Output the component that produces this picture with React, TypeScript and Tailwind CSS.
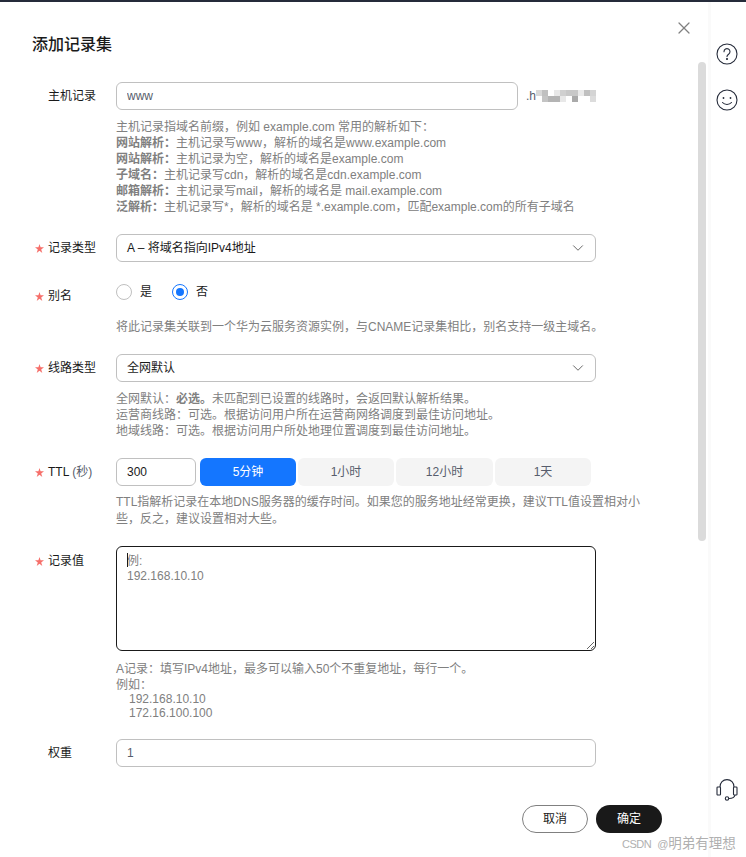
import { ChevronDown, X } from "lucide-react";

const font = "font-['Liberation_Sans','Noto_Sans_CJK_SC',sans-serif]";

function Label({ text, required }: { text: React.ReactNode; required?: boolean }) {
  return (
    <div className="w-[116px] shrink-0 flex items-center pl-[35px] text-xs leading-4 text-[#1a1a1a]">
      <span className="w-[13px] shrink-0">
        {required && (
          <svg width="9" height="9" viewBox="0 0 10 10" fill="#f66f6a">
            <path d="M5 0l1.200 3.700H10L6.900 6l1.200 4L5 7.500 1.900 10l1.200-4L0 3.700h3.800z" />
          </svg>
        )}
      </span>
      <span>{text}</span>
    </div>
  );
}

function Help({ children, className = "" }: { children: React.ReactNode; className?: string }) {
  return <div className={`text-xs leading-4 text-[#808080] ${className}`}>{children}</div>;
}

function Select({ value }: { value: string }) {
  return (
    <div className="w-[480px] h-7 border border-[#c0c0c0] rounded-md flex items-center justify-between pl-[10px] pr-2 text-xs text-[#1a1a1a]">
      <span>{value}</span>
      <ChevronDown className="w-[18px] h-[18px] text-[#666666]" strokeWidth={1.3} />
    </div>
  );
}

const mosaic = [
  "#d8d8d8", "#c0c0c0", "#ffffff", "#e8e8e8", "#d0d0d0", "#c8c8c8", "#c8c8c8", "#eaeaea", "#c0c0c0", "#d4d4d4",
  "#ffffff", "#c4c4c4", "#b4b4b4", "#b4b4b4", "#e8e8e8", "#ffffff", "#aaaaaa", "#ffffff", "#ffffff", "#dcdcdc",
];

function Radio({ checked, text }: { checked?: boolean; text: string }) {
  return (
    <div className="flex items-center gap-2 w-14">
      <span className={`w-4 h-4 rounded-full border flex items-center justify-center ${checked ? "border-[#1476ff]" : "border-[#c0c0c0]"}`}>
        {checked && <span className="w-2 h-2 rounded-full bg-[#1476ff]" />}
      </span>
      <span className="text-xs text-[#1a1a1a]">{text}</span>
    </div>
  );
}

export default function App() {
  return (
    <div className={`${font} w-[746px] h-[857px] overflow-hidden bg-white flex flex-col relative`}>
      <div className="h-0.5 bg-[#252b3a] shrink-0" />
      <div className="flex flex-1 min-h-0">
        {/* Dialog */}
        <div className="w-[708px] shrink-0 relative">
          <button className="absolute left-[674px] top-4 text-[#808080]">
            <X className="w-5 h-5" strokeWidth={1.5} />
          </button>
          {/* Scrollbar */}
          <div className="absolute left-[698px] top-[60px] w-2 h-[479px] rounded bg-[#dbdbdb]" />

          <h2 className="pl-8 pt-[33px] text-base leading-5 font-medium text-[#1a1a1a]">添加记录集</h2>

          {/* 主机记录 */}
          <div className="flex mt-[27px]">
            <div className="pt-[6px]"><Label text="主机记录" /></div>
            <div>
              <div className="flex items-center">
                <input
                  readOnly
                  value="www"
                  className="w-[402px] h-7 border border-[#c0c0c0] rounded-md px-[10px] text-xs text-[#575d6c] outline-none"
                />
                <span className="ml-2 text-xs text-[#575d6c] w-[10px]">.h</span>
                <div className="grid grid-cols-[repeat(10,6px)] auto-rows-[6px]">
                  {mosaic.map((c, i) => (
                    <span key={i} style={{ backgroundColor: c }} />
                  ))}
                </div>
              </div>
              <Help className="mt-[9px]">
                <div>主机记录指域名前缀，例如 example.com 常用的解析如下：</div>
                <div><b>网站解析：</b>主机记录写www，解析的域名是www.example.com</div>
                <div><b>网站解析：</b>主机记录为空，解析的域名是example.com</div>
                <div><b>子域名：</b>主机记录写cdn，解析的域名是cdn.example.com</div>
                <div><b>邮箱解析：</b>主机记录写mail，解析的域名是 mail.example.com</div>
                <div><b>泛解析：</b>主机记录写*，解析的域名是 *.example.com，匹配example.com的所有子域名</div>
              </Help>
            </div>
          </div>

          {/* 记录类型 */}
          <div className="flex mt-[19px]">
            <div className="pt-[6px]"><Label text="记录类型" required /></div>
            <Select value="A – 将域名指向IPv4地址" />
          </div>

          {/* 别名 */}
          <div className="flex mt-[21px]">
            <div className="pt-[5px]"><Label text="别名" required /></div>
            <div>
              <div className="flex h-4 items-center mt-[1px]">
                <Radio text="是" />
                <Radio checked text="否" />
              </div>
              <Help className="mt-[19px]">将此记录集关联到一个华为云服务资源实例，与CNAME记录集相比，别名支持一级主域名。</Help>
            </div>
          </div>

          {/* 线路类型 */}
          <div className="flex mt-[19px]">
            <div className="pt-[6px]"><Label text="线路类型" required /></div>
            <div>
              <Select value="全网默认" />
              <Help className="mt-[9px]">
                <div>全网默认：<b>必选。</b>未匹配到已设置的线路时，会返回默认解析结果。</div>
                <div>运营商线路：可选。根据访问用户所在运营商网络调度到最佳访问地址。</div>
                <div>地域线路：可选。根据访问用户所处地理位置调度到最佳访问地址。</div>
              </Help>
            </div>
          </div>

          {/* TTL */}
          <div className="flex mt-[19px]">
            <div className="pt-[6px]">
              <Label text={<>TTL <span className="text-[#575d6c]">(秒)</span></>} required />
            </div>
            <div>
              <div className="flex text-xs">
                <input
                  readOnly
                  value="300"
                  className="w-20 h-7 border border-[#c0c0c0] rounded-md px-[10px] text-xs text-[#1a1a1a] outline-none"
                />
                <div className="ml-1 w-24 h-7 rounded-md bg-[#1476ff] text-white flex items-center justify-center">5分钟</div>
                <div className="ml-0.5 w-24 h-7 rounded-md bg-[#f4f4f4] text-[#575d6c] flex items-center justify-center">1小时</div>
                <div className="ml-0.5 w-[97px] h-7 rounded-md bg-[#f4f4f4] text-[#575d6c] flex items-center justify-center">12小时</div>
                <div className="ml-0.5 w-24 h-7 rounded-md bg-[#f4f4f4] text-[#575d6c] flex items-center justify-center">1天</div>
              </div>
              <Help className="mt-2 w-[524px] leading-[17px]">
                TTL指解析记录在本地DNS服务器的缓存时间。如果您的服务地址经常更换，建议TTL值设置相对小些，反之，建议设置相对大些。
              </Help>
            </div>
          </div>

          {/* 记录值 */}
          <div className="flex mt-[18px]">
            <div className="pt-[7px]"><Label text="记录值" required /></div>
            <div>
              <div className="relative w-[480px] h-[105px]">
                <textarea
                  readOnly
                  placeholder={"例:\n192.168.10.10"}
                  className="block w-full h-full border border-[#1a1a1a] rounded-md px-[10px] py-[7px] text-xs leading-[15px] outline-none placeholder:text-[#808080]"
                />
                <span className="absolute left-[11px] top-[7px] w-px h-[14px] bg-[#1a1a1a]" />
              </div>
              <Help className="mt-[10px]">
                <div>A记录：填写IPv4地址，最多可以输入50个不重复地址，每行一个。</div>
                <div>例如：</div>
                <div className="pl-[13px] leading-[14px] -mt-px">192.168.10.10</div>
                <div className="pl-[13px] leading-[14px]">172.16.100.100</div>
              </Help>
            </div>
          </div>

          {/* 权重 */}
          <div className="flex mt-[19px]">
            <div className="pt-[6px]"><Label text="权重" /></div>
            <input
              readOnly
              value="1"
              className="w-[480px] h-7 border border-[#c0c0c0] rounded-md px-[10px] text-xs text-[#575d6c] outline-none"
            />
          </div>

          {/* Footer */}
          <div className="flex justify-end gap-2 pr-[46px] mt-[38px] text-xs">
            <button className="w-[66px] h-7 rounded-full border border-[#808080] text-[#1a1a1a]">取消</button>
            <button className="w-[66px] h-7 rounded-full bg-[#191919] text-white">确定</button>
          </div>
        </div>

        {/* Right rail */}
        <div className="flex-1 bg-white border-l-[3px] border-[#fafafa] flex flex-col items-center pt-[41px] pr-[3px]">
          <svg width="22" height="22" viewBox="0 0 22 22" fill="none" stroke="#252b3a" strokeWidth="1.1">
            <circle cx="11" cy="11" r="10" />
            <path d="M8 8.700a3 3 0 1 1 4.600 2.500c-1 .7-1.600 1.200-1.600 2.400" strokeLinecap="round" />
            <circle cx="11" cy="16" r="0.5" fill="#252b3a" />
          </svg>
          <svg className="mt-6" width="22" height="22" viewBox="0 0 22 22" fill="none" stroke="#252b3a" strokeWidth="1.1">
            <circle cx="11" cy="11" r="10" />
            <circle cx="7.500" cy="9" r="0.9" fill="#252b3a" stroke="none" />
            <circle cx="14.500" cy="9" r="0.9" fill="#252b3a" stroke="none" />
            <path d="M6.500 13.500c2.200 2.600 6.800 2.600 9 0" strokeLinecap="round" />
          </svg>
          <svg className="mt-auto mb-[56px]" width="22" height="22" viewBox="0 0 22 22" fill="none" stroke="#252b3a" strokeWidth="1.1">
            <path d="M4 8C4 3.500 7 .6 11 .6S18 3.500 18 8" />
            <rect x="1" y="8" width="3.500" height="8" rx="0.8" />
            <rect x="17.500" y="8" width="3.500" height="8" rx="0.8" />
            <path d="M19 16c-.5 2.500-3 3.500-6 3.500" />
            <circle cx="11" cy="19.500" r="1.700" />
          </svg>
        </div>
      </div>

      {/* Watermark */}
      <div className="absolute left-[622px] top-[835px] leading-[18px] text-[#b0b0b0] whitespace-nowrap flex items-center">
        <span className="text-[11px] tracking-[-0.5px] mr-[6px]">CSDN</span>
        <span className="text-[11px]">@</span>
        <span className="text-[13.500px]">明弟有理想</span>
      </div>
    </div>
  );
}
